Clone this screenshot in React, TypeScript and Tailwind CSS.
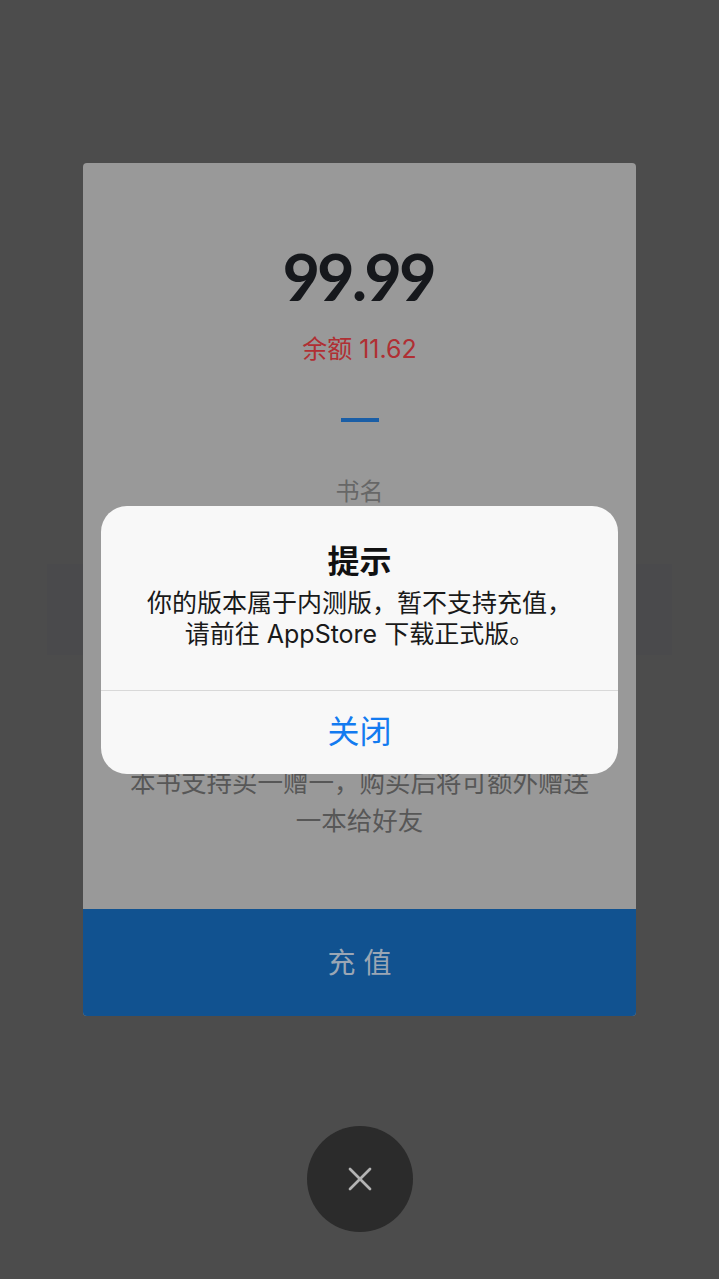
import { X } from "lucide-react";

const CJK = "font-['Inter','Noto_Sans_CJK_SC',sans-serif]";

function AlertDialog() {
  return (
    <div className="absolute inset-0 z-20 flex items-center justify-center">
      <div className="w-[517px] h-[268px] rounded-[26px] bg-[#f8f8f8] flex flex-col items-center">
        <div className="pt-[36px] text-[32px] leading-[40px] font-bold text-[#111]">提示</div>
        <div className="mt-[6px] text-[25px] leading-[31px] text-[#1a1a1a] text-center">
          你的版本属于内测版，暂不支持充值，
          <br />
          请前往 AppStore 下载正式版。
        </div>
        <div className="mt-auto w-full border-t border-[#d9d9d9] h-[84px] flex items-center justify-center">
          <span className="text-[32px] leading-[40px] text-[#137bf0]">关闭</span>
        </div>
      </div>
    </div>
  );
}

export default function App() {
  return (
    <div className={`relative w-[719px] h-[1279px] bg-[#4c4c4c] flex flex-col items-center overflow-hidden ${CJK}`}>
      {/* faint row behind the card, only shows at the sides */}
      <div className="absolute left-[47px] top-[564px] w-[625px] h-[91px] bg-[#4a4a4c]" />

      <div className="relative z-10 mt-[163px] w-[553px] h-[853px] bg-[#999999] rounded-[4px] overflow-hidden flex flex-col">
        <div className="flex-1 flex flex-col items-center">
          <div className="mt-[77px] font-['Lato',sans-serif] font-bold text-[65px] leading-[72px] tracking-[-3px] pr-[3px] text-[#16181c]">
            99.99
          </div>
          <div className="mt-[21px] text-[25px] leading-[32px] text-[#b02f33]">余额 11.62</div>
          <div className="mt-[53px] w-[38px] h-[4px] bg-[#1a5ea6]" />
          <div className="mt-[55px] text-[24px] leading-[30px] text-[#676767]">书名</div>
          <div className="mt-[257px] px-[40px] text-[25.5px] leading-[38px] text-[#575757] text-center">
            本书支持买一赠一，购买后将可额外赠送
            <br />
            一本给好友
          </div>
        </div>
        <button className="h-[107px] w-full bg-[#115290] flex items-center justify-center pl-[8px] text-[28px] tracking-[8px] text-[#9ba6b4]">
          充值
        </button>
      </div>

      <button className="relative z-10 mt-[110px] w-[106px] h-[106px] rounded-full bg-[#2b2b2b] flex items-center justify-center">
        <X size={40} strokeWidth={1.6} color="#b3b3b3" />
      </button>

      <AlertDialog />
    </div>
  );
}
